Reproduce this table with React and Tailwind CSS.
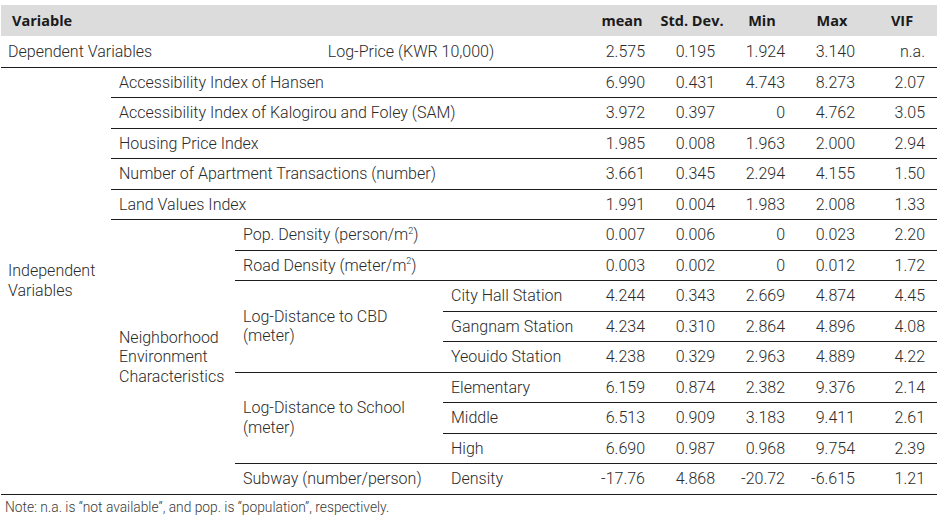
const stats = {
  price: ["2.575", "0.195", "1.924", "3.140", "n.a."],
  hansen: ["6.990", "0.431", "4.743", "8.273", "2.07"],
  sam: ["3.972", "0.397", "0", "4.762", "3.05"],
  hpi: ["1.985", "0.008", "1.963", "2.000", "2.94"],
  trans: ["3.661", "0.345", "2.294", "4.155", "1.50"],
  land: ["1.991", "0.004", "1.983", "2.008", "1.33"],
  pop: ["0.007", "0.006", "0", "0.023", "2.20"],
  road: ["0.003", "0.002", "0", "0.012", "1.72"],
  cityHall: ["4.244", "0.343", "2.669", "4.874", "4.45"],
  gangnam: ["4.234", "0.310", "2.864", "4.896", "4.08"],
  yeouido: ["4.238", "0.329", "2.963", "4.889", "4.22"],
  elem: ["6.159", "0.874", "2.382", "9.376", "2.14"],
  middle: ["6.513", "0.909", "3.183", "9.411", "2.61"],
  high: ["6.690", "0.987", "0.968", "9.754", "2.39"],
  subway: ["-17.76", "4.868", "-20.72", "-6.615", "1.21"],
};

const cell = "border-b border-[#1c1c1c] px-[8px] align-middle";

function Nums({ values }) {
  return values.map((v, i) => (
    <td key={i} className={`${cell} text-right pr-[12px]`}>
      {v}
    </td>
  ));
}

export default function App() {
  return (
    <div
      className="bg-white w-[947px] h-[522px] pt-[5px] pl-[1px] text-[16px] text-[#2a2a2a]"
      style={{ fontFamily: "Roboto, 'Liberation Sans', sans-serif", fontWeight: 300 }}
    >
      <table className="table-fixed w-[936px] border-collapse leading-[19.5px]">
        <colgroup>
          <col className="w-[110px]" />
          <col className="w-[124px]" />
          <col className="w-[208px]" />
          <col className="w-[144px]" />
          <col className="w-[70px]" />
          <col className="w-[70px]" />
          <col className="w-[70px]" />
          <col className="w-[70px]" />
          <col className="w-[70px]" />
        </colgroup>

        <thead>
          <tr
            className="bg-[#dcdcdc] h-[31px] text-[#1a1a1a] text-[14.5px]"
            style={{ fontFamily: "'Open Sans', 'Liberation Sans', sans-serif", fontWeight: 700 }}
          >
            <th colSpan={4} className="text-left pl-[11px]">
              Variable
            </th>
            <th className="text-center">mean</th>
            <th className="text-center">Std. Dev.</th>
            <th className="text-center">Min</th>
            <th className="text-center">Max</th>
            <th className="text-center">VIF</th>
          </tr>
        </thead>

        <tbody>
          <tr className="h-[31px]">
            <td colSpan={2} className={`${cell} pl-[7px] whitespace-nowrap`}>
              Dependent Variables
            </td>
            <td colSpan={2} className={`${cell} text-center whitespace-nowrap`}>
              Log-Price (KWR 10,000)
            </td>
            <Nums values={stats.price} />
          </tr>

          <tr className="h-[30.5px]">
            <td rowSpan={14} className={`${cell} pl-[7px]`}>
              Independent Variables
            </td>
            <td colSpan={3} className={cell}>Accessibility Index of Hansen</td>
            <Nums values={stats.hansen} />
          </tr>
          <tr className="h-[30.5px]">
            <td colSpan={3} className={cell}>
              Accessibility Index of Kalogirou and Foley (SAM)
            </td>
            <Nums values={stats.sam} />
          </tr>
          <tr className="h-[30.5px]">
            <td colSpan={3} className={cell}>Housing Price Index</td>
            <Nums values={stats.hpi} />
          </tr>
          <tr className="h-[30.5px]">
            <td colSpan={3} className={cell}>
              Number of Apartment Transactions (number)
            </td>
            <Nums values={stats.trans} />
          </tr>
          <tr className="h-[30.5px]">
            <td colSpan={3} className={cell}>Land Values Index</td>
            <Nums values={stats.land} />
          </tr>

          {/* neighborhood block */}
          <tr className="h-[30.5px]">
            <td rowSpan={9} className={cell}>
              Neighborhood Environment Characteristics
            </td>
            <td colSpan={2} className={cell}>
              Pop. Density (person/m<sup className="text-[9px] -top-[0.7em]">2</sup>)
            </td>
            <Nums values={stats.pop} />
          </tr>
          <tr className="h-[30.5px]">
            <td colSpan={2} className={cell}>
              Road Density (meter/m<sup className="text-[9px] -top-[0.7em]">2</sup>)
            </td>
            <Nums values={stats.road} />
          </tr>
          <tr className="h-[30.5px]">
            <td rowSpan={3} className={cell}>
              Log-Distance to CBD (meter)
            </td>
            <td className={`${cell} whitespace-nowrap`}>City Hall Station</td>
            <Nums values={stats.cityHall} />
          </tr>
          <tr className="h-[30.5px]">
            <td className={`${cell} whitespace-nowrap`}>Gangnam Station</td>
            <Nums values={stats.gangnam} />
          </tr>
          <tr className="h-[30.5px]">
            <td className={`${cell} whitespace-nowrap`}>Yeouido Station</td>
            <Nums values={stats.yeouido} />
          </tr>
          <tr className="h-[30.5px]">
            <td rowSpan={3} className={cell}>
              Log-Distance to School (meter)
            </td>
            <td className={cell}>Elementary</td>
            <Nums values={stats.elem} />
          </tr>
          <tr className="h-[30.5px]">
            <td className={cell}>Middle</td>
            <Nums values={stats.middle} />
          </tr>
          <tr className="h-[30.5px]">
            <td className={cell}>High</td>
            <Nums values={stats.high} />
          </tr>
          <tr className="h-[30.5px]">
            <td className={`${cell} whitespace-nowrap`}>Subway (number/person)</td>
            <td className={cell}>Density</td>
            <Nums values={stats.subway} />
          </tr>
        </tbody>
      </table>

      <p className="text-[13.8px] text-[#3a3a3a] pl-[4px] mt-[4px] leading-[17px]">
        Note: n.a. is “not available”, and pop. is “population”, respectively.
      </p>
    </div>
  );
}
